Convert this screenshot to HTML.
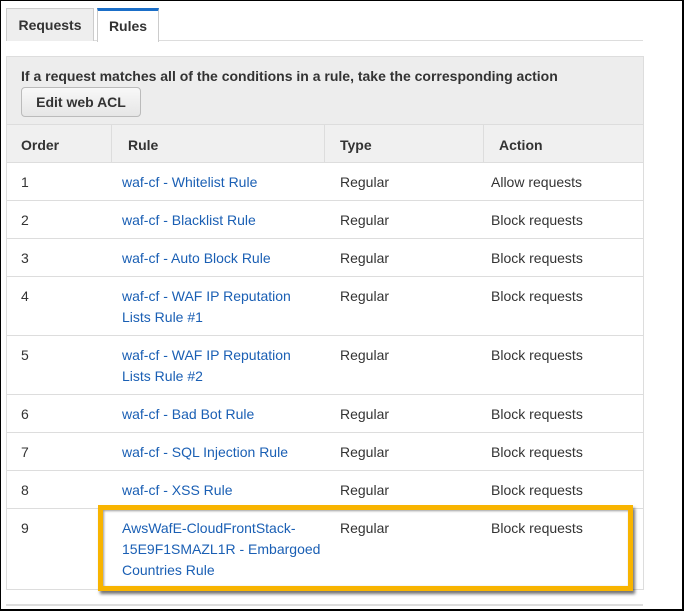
<!DOCTYPE html>
<html><head><style>
*{box-sizing:border-box;margin:0;padding:0}
body{width:684px;height:611px;background:#fff;font-family:"Liberation Sans",Arial,sans-serif;font-size:14px;color:#333;position:relative;overflow:hidden}
.frame{position:absolute;left:0;top:0;width:684px;height:611px;border:1px solid #000;border-width:1px 2px 2px 1px}
.tab{position:absolute;top:8px;height:33px;border:1px solid #ccc;border-bottom:none;font-weight:bold;font-size:14px;line-height:32px;text-align:center;color:#333}
.a{position:absolute}
.row{position:absolute;left:6px;width:637px;border-bottom:1px solid #ddd}
.c{position:absolute;top:13px}
.l{color:#1a5fb4;line-height:21px}
</style></head><body>
<div class="a" style="left:6px;top:40px;width:637px;border-top:1px solid #ddd"></div>
<div class="tab" style="left:6px;width:88px;background:#eee">Requests</div>
<div class="tab" style="left:97px;width:62px;background:#fff;border-top:3px solid #1a6ec8;height:34px;line-height:30px">Rules</div>
<div class="a" style="left:6px;top:56px;width:638px;height:534px;border:1px solid #ddd"></div>
<div class="a" style="left:7px;top:57px;width:636px;height:68px;background:#ededed;border-bottom:1px solid #ddd"></div>
<div class="a" style="left:21px;top:68px;font-weight:bold">If a request matches all of the conditions in a rule, take the corresponding action</div>
<div class="a" style="left:21px;top:87px;width:120px;height:30px;border:1px solid #bbb;border-radius:4px;background:linear-gradient(#f8f8f8,#e6e6e6);font-weight:bold;line-height:28px;text-align:center">Edit web ACL</div>
<div class="a" style="left:7px;top:125px;width:636px;height:38px;background:#f0f0f0;border-bottom:1px solid #ddd;font-weight:bold">
<div class="c" style="left:14px;top:12px">Order</div><div class="c" style="left:121px;top:12px">Rule</div><div class="c" style="left:333px;top:12px">Type</div><div class="c" style="left:492px;top:12px">Action</div>
<div class="a" style="left:104px;top:0;height:38px;border-left:1px solid #ddd"></div>
<div class="a" style="left:317px;top:0;height:38px;border-left:1px solid #ddd"></div>
<div class="a" style="left:476px;top:0;height:38px;border-left:1px solid #ddd"></div>
</div>
<div class="row" style="top:163px;height:38px"><div class="c" style="left:15px;top:11px">1</div><div class="c l" style="left:116px;top:9px">waf-cf - Whitelist Rule</div><div class="c" style="left:334px;top:11px">Regular</div><div class="c" style="left:485px;top:11px">Allow requests</div></div>
<div class="row" style="top:201px;height:38px"><div class="c" style="left:15px;top:11px">2</div><div class="c l" style="left:116px;top:9px">waf-cf - Blacklist Rule</div><div class="c" style="left:334px;top:11px">Regular</div><div class="c" style="left:485px;top:11px">Block requests</div></div>
<div class="row" style="top:239px;height:38px"><div class="c" style="left:15px;top:11px">3</div><div class="c l" style="left:116px;top:9px">waf-cf - Auto Block Rule</div><div class="c" style="left:334px;top:11px">Regular</div><div class="c" style="left:485px;top:11px">Block requests</div></div>
<div class="row" style="top:277px;height:59px"><div class="c" style="left:15px;top:11px">4</div><div class="c l" style="left:116px;top:9px">waf-cf - WAF IP Reputation<br>Lists Rule #1</div><div class="c" style="left:334px;top:11px">Regular</div><div class="c" style="left:485px;top:11px">Block requests</div></div>
<div class="row" style="top:336px;height:59px"><div class="c" style="left:15px;top:11px">5</div><div class="c l" style="left:116px;top:9px">waf-cf - WAF IP Reputation<br>Lists Rule #2</div><div class="c" style="left:334px;top:11px">Regular</div><div class="c" style="left:485px;top:11px">Block requests</div></div>
<div class="row" style="top:395px;height:38px"><div class="c" style="left:15px;top:11px">6</div><div class="c l" style="left:116px;top:9px">waf-cf - Bad Bot Rule</div><div class="c" style="left:334px;top:11px">Regular</div><div class="c" style="left:485px;top:11px">Block requests</div></div>
<div class="row" style="top:433px;height:38px"><div class="c" style="left:15px;top:11px">7</div><div class="c l" style="left:116px;top:9px">waf-cf - SQL Injection Rule</div><div class="c" style="left:334px;top:11px">Regular</div><div class="c" style="left:485px;top:11px">Block requests</div></div>
<div class="row" style="top:471px;height:38px"><div class="c" style="left:15px;top:11px">8</div><div class="c l" style="left:116px;top:9px">waf-cf - XSS Rule</div><div class="c" style="left:334px;top:11px">Regular</div><div class="c" style="left:485px;top:11px">Block requests</div></div>
<div class="row" style="top:509px;height:80px;border:none"><div class="c" style="left:15px;top:11px">9</div><div class="c l" style="left:116px;top:9px">AwsWafE-CloudFrontStack-<br>15E9F1SMAZL1R - Embargoed<br>Countries Rule</div><div class="c" style="left:334px;top:11px">Regular</div><div class="c" style="left:485px;top:11px">Block requests</div></div>
<div class="a" style="left:98px;top:505px;width:535px;height:86px;border:5px solid #f8b400;box-shadow:2px 3px 3px rgba(0,0,0,.55), inset 1px 1px 2px rgba(0,0,0,.4)"></div>
<div class="a" style="left:6px;top:604px;width:637px;border-top:2px solid #ddd"></div>
<div class="frame"></div>
</body></html>
